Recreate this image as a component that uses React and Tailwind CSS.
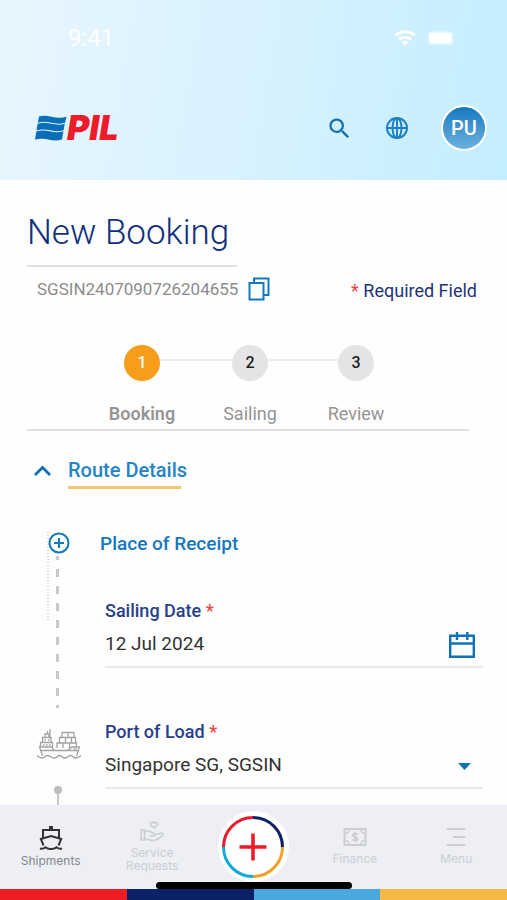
import { useState } from "react";
import { MdSearch } from "react-icons/md";

const STEPS = [
  { number: 1, label: "Booking" },
  { number: 2, label: "Sailing" },
  { number: 3, label: "Review" },
];

// Waving flag next to the company name
function Logo() {
  return (
    <a href="#home" aria-label="PIL" className="flex items-center">
      <svg width="32" height="28" viewBox="0 0 32 28" aria-hidden="true">
        <g fill="#0a6fb8">
          <path d="M4 2.500C12-.5 20 6 31.500 2.800L30 8.800C20 12 12 5.500 2.800 8.800Z" />
          <path d="M2.600 9.800C12 6.500 20 13 29.800 9.800L28.600 16.200C19 19.500 12 13 1.500 16.500Z" />
          <path d="M1.300 17.500C11 14 18 20.500 28.400 17.200L27 25.500C17 29 11 22 0 25.800Z" />
        </g>
      </svg>
      <span className="font-[Inter,sans-serif] text-[34px] leading-8 font-black italic text-[#ed1c2b]">PIL</span>
    </a>
  );
}

function GlobeIcon() {
  return (
    <svg width="24" height="24" viewBox="0 0 24 24" fill="none" stroke="#1b80c4" strokeWidth="2" aria-hidden="true">
      <circle cx="12" cy="12" r="10" />
      <ellipse cx="12" cy="12" rx="4.500" ry="10" />
      <path d="M12 2v20M2 12h20" />
    </svg>
  );
}

function StatusBar() {
  return (
    <div className="flex h-8 items-center justify-between pr-8 pl-12">
      <span className="text-2xl text-white">9:41</span>
      <div className="flex items-center gap-3">
        <svg width="22" height="16" viewBox="0 0 22 16" fill="none" stroke="#fff" strokeWidth="3" aria-hidden="true">
          <path d="M1.500 5.500C7 .5 15 .5 20.500 5.500M5 9.500c3.500-3 8.500-3 12 0" />
          <path d="M11 16l-3.500-4c2-1.600 5-1.600 7 0z" fill="#fff" stroke="none" />
        </svg>
        <svg width="27" height="14" viewBox="0 0 27 14" aria-hidden="true">
          <rect x="0.500" y="0.500" width="25" height="13" rx="3" fill="none" stroke="#fff" strokeOpacity="0.350" />
          <rect x="1" y="1.500" width="23" height="11" rx="2" fill="#fff" />
        </svg>
      </div>
    </div>
  );
}

function Header() {
  return (
    <header className="bg-linear-100 from-[#e8f6ff] via-[#d8f2fe] to-[#c3eeff] pt-[22px] pr-5 pb-[29px] pl-5">
      <StatusBar />
      <div className="mt-[51px] flex items-center justify-between pl-[15px]">
        <Logo />
        <div className="flex items-center">
          <button type="button" aria-label="Search" className="mr-8 text-[#0f6db5]">
            <MdSearch size={27} />
          </button>
          <button type="button" aria-label="Language" className="mr-8">
            <GlobeIcon />
          </button>
          <button
            type="button"
            className="size-[46px] rounded-full border-2 border-white bg-linear-to-b from-[#0d78bf] to-[#6ab2df] text-xl font-medium text-white"
          >
            PU
          </button>
        </div>
      </div>
    </header>
  );
}

function Stepper() {
  return (
    <ol className="mr-[14px] grid grid-cols-[108px_108px_104px] justify-center border-b-2 border-[#dedee0] pt-10">
      {STEPS.map(({ number, label }, i) => (
        <li key={label} aria-current={number === 1 ? "step" : undefined}>
          <div className="flex items-center">
            <span className={`mb-1.5 h-0.5 flex-1 ${i > 0 ? "bg-[#ebebec]" : ""}`} />
            <span
              className={`flex size-9 items-center justify-center rounded-full text-base font-medium ${
                number === 1 ? "bg-[#f89c1c] text-white" : "bg-[#e4e4e6] text-[#222]"
              }`}
            >
              {number}
            </span>
            <span className={`mb-1.5 h-0.5 flex-1 ${i < STEPS.length - 1 ? "bg-[#ebebec]" : ""}`} />
          </div>
          <p
            className={`mt-[21px] pb-[3px] text-center text-lg leading-6 text-[#959595] ${
              number === 1 ? "font-semibold" : ""
            }`}
          >
            {label}
          </p>
        </li>
      ))}
    </ol>
  );
}

function CargoShipIcon() {
  return (
    <svg width="44" height="32" viewBox="0 0 44 32" fill="none" stroke="#a3a3a3" strokeWidth="1.300" aria-hidden="true">
      <path d="M5.500 28L2.500 19h12l3 3.500h13.500l3.500-3.500H42.500l-3 9M4 22.500h14M30 22.500h11.500" />
      <path d="M3.500 19v-4.500h12V19M5.500 14.500V9.500h8.500v5M8 9.500V6h4v3.500M10.500 6V3M13 9V1" />
      <path d="M7.500 12h1.500M11 12h1.500M6 17h1.500M9 17h1.500M12 17h1.500M36.500 20.800h3" />
      <path d="M20 20v-5h6v5M26 20v-5h6.500v5M32.500 18.500V15h7v4M22.500 15V9.500h6V15M28.500 9.500h6V15M34.500 9.500h4V15M25 9.500V4.500h6v5M31 4.500h6v5" />
      <path d="M0 28c2 0 2.500 2 5 2s3.500-2.500 6-2.500S14 30 17 30s3-2.500 5.500-2.500S25 30 28 30s3-2.500 5.500-2.500S36 30 39 30s3-2 5-2" />
    </svg>
  );
}

// Vertical line that joins the stops of the route
function RouteRail() {
  return (
    <div className="relative flex w-11 shrink-0 flex-col items-center">
      <span className="absolute top-0 left-[10px] h-[88px] w-0.5 bg-[repeating-linear-gradient(to_bottom,#d4d4d4_0_1px,transparent_1px_3px)]" />
      <button type="button" aria-label="Add place of receipt" className="relative">
        <svg width="22" height="22" viewBox="0 0 22 22" fill="none" stroke="#0f78be" strokeWidth="2" aria-hidden="true">
          <circle cx="11" cy="11" r="9.500" />
          <path d="M11 6v10M6 11h10" />
        </svg>
      </button>
      <span className="mt-0.5 mr-[3px] h-[152px] w-[3px] bg-[repeating-linear-gradient(to_bottom,#c9c9c9_0_4px,transparent_4px_13px,#c9c9c9_13px_17px)]" />
      <span className="mt-5">
        <CargoShipIcon />
      </span>
      <span className="mt-[26px] mr-[3px] size-2 shrink-0 rounded-full bg-[#bdbdbd]" />
      <span className="mr-[3px] w-0.5 flex-1 bg-[#c9c9c9]" />
    </div>
  );
}

function FieldLabel({ htmlFor, children }) {
  return (
    <label htmlFor={htmlFor} className="block text-lg leading-6 font-medium text-[#28408a]">
      {children} <span className="text-[#f04444]">*</span>
    </label>
  );
}

function RouteForm() {
  const [date, setDate] = useState("12 Jul 2024");
  const [port, setPort] = useState("SGSIN");

  return (
    <div className="min-w-0 flex-1">
      <h3 className="text-[19px] leading-6 font-medium text-[#1478be]">Place of Receipt</h3>
      <div className="pl-[5px]">
        <div className="mt-[43px]">
          <FieldLabel htmlFor="sailing-date">Sailing Date</FieldLabel>
          <div className="flex h-[45px] items-center border-b-2 border-[#e9e9e9] pr-2">
            <input
              id="sailing-date"
              type="text"
              value={date}
              onChange={(e) => setDate(e.target.value)}
              className="min-w-0 flex-1 text-[19px] text-[#333] outline-none"
            />
            <button type="button" aria-label="Open calendar">
              <svg width="26" height="26" viewBox="0 0 26 26" fill="none" stroke="#0f72b8" strokeWidth="2.400" aria-hidden="true">
                <path d="M1.200 3.700h23.600v21.100H1.200zM1.200 11.500h23.600M8 0v8M18.300 0v8" />
              </svg>
            </button>
          </div>
        </div>
        <div className="mt-[52px]">
          <FieldLabel htmlFor="port-of-load">Port of Load</FieldLabel>
          <div className="relative h-[45px] border-b-2 border-[#e9e9e9]">
            <select
              id="port-of-load"
              value={port}
              onChange={(e) => setPort(e.target.value)}
              className="h-full w-full appearance-none text-[19px] text-[#333] outline-none"
            >
              <option value="SGSIN">Singapore SG, SGSIN</option>
            </select>
            <svg className="pointer-events-none absolute top-[19px] right-3" width="13" height="7" viewBox="0 0 13 7" aria-hidden="true">
              <path d="M0 0h13L6.500 7z" fill="#0f72b8" />
            </svg>
          </div>
        </div>
      </div>
    </div>
  );
}

function NavItem({ label, active = false, children }) {
  return (
    <a
      href={`#${label.toLowerCase()}`}
      className={`flex flex-col items-center text-center text-xs leading-[13px] ${
        active ? "text-[#858589]" : "text-[#cbcdd2]"
      }`}
    >
      {children}
      <span className="w-16">{label}</span>
    </a>
  );
}

function BottomNav() {
  return (
    <footer className="shrink-0">
      <nav className="relative grid grid-cols-5 items-center bg-[#edeff5] pt-1.5 pb-[7px] font-[Inter,sans-serif]">
        <NavItem label="Shipments" active>
          <svg width="24" height="24" viewBox="0 0 24 24" fill="none" stroke="#333" strokeWidth="2" className="mb-1" aria-hidden="true">
            <path d="M4 12V4h16v8" />
            <path d="M10 0h4v4h-4z" fill="#333" stroke="none" />
            <path d="M4.500 19.500L1.800 13 12 10l10.200 3-2.700 6.500" />
            <path d="M1 22.500c2 .6 3.700.3 5.500-1.200 3.500 2.200 7.500 2.200 11 0 1.800 1.500 3.500 1.800 5.500 1.200" />
          </svg>
        </NavItem>
        <NavItem label="Service Requests">
          <svg width="24" height="21" viewBox="0 0 24 21" fill="none" stroke="currentColor" strokeWidth="1.700" strokeLinejoin="round" className="mb-1" aria-hidden="true">
            <path d="M1 9h3.500v10H1z" />
            <path d="M4.500 10h4.500l5 2.200c1.500.8 1 2.800-.8 2.800H9.500M14.500 14l5.500-1.700c2.500-.6 3.800 1.200 2.200 2.400C19.500 17 17 19.500 13 19.500L4.500 18" />
            <path d="M14 7.200l-3.200-3.200c-1.200-1.800 1.400-4 3.200-1.700 1.800-2.300 4.400-.1 3.200 1.700z" />
          </svg>
        </NavItem>
        <button type="button" aria-label="Create" className="flex size-[71px] items-center justify-center justify-self-center rounded-full bg-white">
          <svg width="62" height="62" viewBox="0 0 62 62" fill="none" strokeWidth="3" aria-hidden="true">
            <path d="M1.500 31A29.500 29.500 0 0 1 31 1.500" stroke="#e41e2f" />
            <path d="M31 1.500A29.500 29.500 0 0 1 60.500 31" stroke="#0d2364" />
            <path d="M60.500 31A29.500 29.500 0 0 1 31 60.500" stroke="#f3a02b" />
            <path d="M31 60.500A29.500 29.500 0 0 1 1.500 31" stroke="#10a9dc" />
            <path d="M31 17.500v27M17.500 31h27" stroke="#ed1c2b" strokeWidth="3.600" />
          </svg>
        </button>
        <NavItem label="Finance">
          <svg width="24" height="18" viewBox="0 0 24 18" fill="none" stroke="currentColor" strokeWidth="2" className="mb-1.5" aria-hidden="true">
            <path d="M1.500 1h21v16h-21z" />
            <path d="M2 5.500C5 5.500 6 4 6 1.500M22 5.500c-3 0-4-1.500-4-4M2 12.500c3 0 4 1.500 4 4M22 12.500c-3 0-4 1.500-4 4" strokeWidth="1.500" />
            <path d="M14.500 6.500c-1-1.500-5-1.300-5 .8 0 2.200 5 1.300 5 3.600 0 2-4 2.100-5 .6M12 4v10" strokeWidth="1.600" />
          </svg>
        </NavItem>
        <NavItem label="Menu">
          <svg width="20" height="18" viewBox="0 0 20 18" fill="none" stroke="currentColor" strokeWidth="2" className="mb-1.5" aria-hidden="true">
            <path d="M1 1h18M7 9h12M1 17h18" />
          </svg>
        </NavItem>
        <span className="absolute bottom-0 left-1/2 h-[7px] w-[196px] -translate-x-1/2 rounded-full bg-black" />
      </nav>
      <div className="grid h-[11px] grid-cols-4">
        <span className="bg-[#ee1c25]" />
        <span className="bg-[#0d2168]" />
        <span className="bg-[#4ba7de]" />
        <span className="bg-[#f7b946]" />
      </div>
    </footer>
  );
}

export default function App() {
  return (
    <div className="flex h-screen flex-col bg-[#fefefe] font-[Roboto,sans-serif]">
      <Header />
      <main className="flex flex-1 flex-col overflow-y-auto pt-[33px] pr-6 pl-[27px]">
        <h1 className="w-[210px] border-b-2 border-[#dedede] pb-3 text-[35px] leading-10 font-light whitespace-nowrap text-[#10307c]">
          New Booking
        </h1>
        <div className="mt-[10px] flex items-start pr-1.5 pl-[10px]">
          <span className="text-[17px] leading-6 text-[#8c8c8c]">SGSIN2407090726204655</span>
          <button type="button" aria-label="Copy booking number" className="ml-2.5">
            <svg width="22" height="24" viewBox="0 0 22 24" fill="none" stroke="#1478be" strokeWidth="2" aria-hidden="true">
              <path d="M1.500 6h14v16.500h-14zM6 6V1.500h14.500V18h-5" />
            </svg>
          </button>
          <p className="ml-auto text-lg leading-7 text-[#1f3478]">
            <span className="text-[#f04444]">*</span> Required Field
          </p>
        </div>
        <Stepper />
        <h2 className="mt-[25px]">
          <button type="button" aria-expanded="true" className="flex items-center pl-[7px] text-xl leading-7 font-medium text-[#2484c6]">
            <svg width="17" height="11" viewBox="0 0 17 11" fill="none" stroke="#0f6db5" strokeWidth="2.800" aria-hidden="true">
              <path d="M1 10l7.500-7.500L16 10" />
            </svg>
            <span className="ml-[17px]">Route Details</span>
          </button>
        </h2>
        <span className="mt-0.5 ml-[41px] h-[3px] w-[113px] shrink-0 bg-[#f5c66d]" />
        <section className="mt-[43px] flex flex-1 gap-[19px] pl-[10px]">
          <RouteRail />
          <RouteForm />
        </section>
      </main>
      <BottomNav />
    </div>
  );
}
